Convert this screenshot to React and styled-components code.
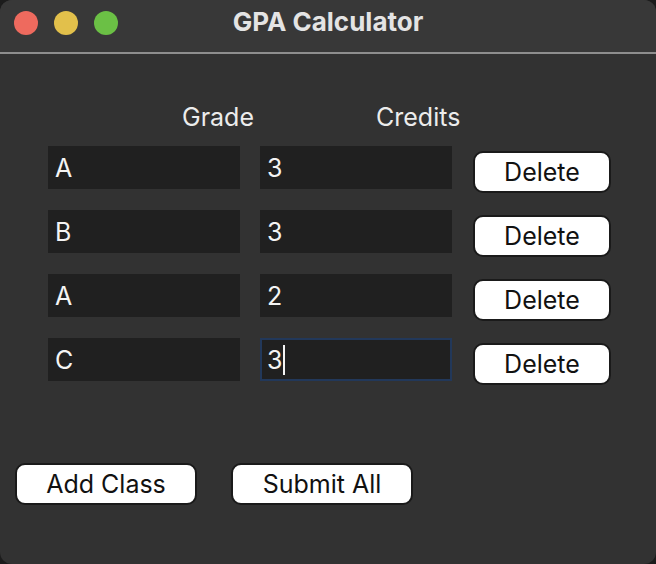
import React from 'react';
import styled, { createGlobalStyle } from 'styled-components';

const GlobalStyle = createGlobalStyle`
  html, body {
    margin: 0;
    padding: 0;
    background: #1c1c1c;
  }
  * {
    box-sizing: border-box;
  }
`;

const Window = styled.div`
  width: 656px;
  height: 564px;
  background: #323232;
  border-radius: 12px;
  overflow: hidden;
  font-family: Inter, "Liberation Sans", sans-serif;
  display: flex;
  flex-direction: column;
`;

const TitleBar = styled.div`
  height: 54px;
  flex-shrink: 0;
  background: #383838;
  border-bottom: 2px solid #8e8e8e;
  display: flex;
  align-items: center;
  position: relative;
  padding-left: 14px;
`;

const Lights = styled.div`
  display: flex;
  gap: 16px;
  margin-top: -6px;
`;

const Light = styled.span`
  width: 24px;
  height: 24px;
  border-radius: 50%;
  background: ${p => p.color};
`;

const Title = styled.div`
  position: absolute;
  left: 0;
  right: 0;
  top: 6px;
  text-align: center;
  font-size: 26px;
  font-weight: 700;
  color: #e4e4e4;
  pointer-events: none;
`;

const Content = styled.div`
  flex: 1;
  display: flex;
  flex-direction: column;
  padding: 48px 0 0 48px;
`;

const Headers = styled.div`
  display: flex;
  padding-left: 134px;
  gap: 122px;
  font-size: 25px;
  color: #ececec;
  height: 30px;
  align-items: center;
`;

const Rows = styled.div`
  display: flex;
  flex-direction: column;
  gap: 21px;
  margin-top: 14px;
`;

const Row = styled.div`
  display: flex;
  align-items: flex-start;
  height: 43px;
`;

const Field = styled.div`
  width: 192px;
  height: 43px;
  background: #202020;
  border: 2px solid ${p => (p.$focused ? '#22385a' : '#202020')};
  color: #f4f4f4;
  font-size: 25px;
  padding-left: 5px;
  display: flex;
  align-items: center;
  margin-right: ${p => p.$gap || 0}px;
`;

const Caret = styled.span`
  display: inline-block;
  width: 1.5px;
  height: 30px;
  background: #f4f4f4;
  margin-left: 1px;
`;

const Button = styled.button`
  width: ${p => p.$w}px;
  height: 42px;
  background: #ffffff;
  border: 2px solid #1a1a1a;
  border-radius: 10px;
  font-family: Inter, "Liberation Sans", sans-serif;
  font-size: 25px;
  color: #111;
  padding: 0;
  margin-top: ${p => p.$top || 0}px;
  cursor: pointer;
  flex-shrink: 0;
`;

const Footer = styled.div`
  display: flex;
  gap: 34px;
  margin: 82px 0 0 -33px;
`;

const classes = [
  { grade: 'A', credits: '3' },
  { grade: 'B', credits: '3' },
  { grade: 'A', credits: '2' },
  { grade: 'C', credits: '3', focused: true },
];

export default function App() {
  return (
    <>
      <GlobalStyle />
      <Window>
        <TitleBar>
          <Lights>
            <Light color="#ee6a5e" />
            <Light color="#e2c04b" />
            <Light color="#6bc045" />
          </Lights>
          <Title>GPA Calculator</Title>
        </TitleBar>
        <Content>
          <Headers>
            <span>Grade</span>
            <span>Credits</span>
          </Headers>
          <Rows>
            {classes.map((c, i) => (
              <Row key={i}>
                <Field $gap={20}>{c.grade}</Field>
                <Field $gap={21} $focused={c.focused}>
                  {c.credits}
                  {c.focused && <Caret />}
                </Field>
                <Button $w={138} $top={5}>Delete</Button>
              </Row>
            ))}
          </Rows>
          <Footer>
            <Button $w={182}>Add Class</Button>
            <Button $w={182}>Submit All</Button>
          </Footer>
        </Content>
      </Window>
    </>
  );
}
